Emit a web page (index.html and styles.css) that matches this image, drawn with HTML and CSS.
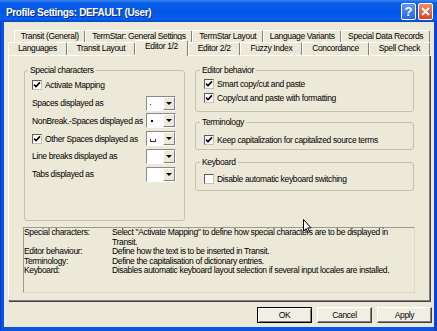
FILE: index.html
```html
<!DOCTYPE html>
<html>
<head>
    <title>Profile Settings</title>
    <link rel="stylesheet" href="styles.css">
</head>
<body>
    <div class="window">
        <div class="titlebar">
            <span class="title">Profile Settings: DEFAULT (User)</span>
            <div class="title-buttons">
                <span class="tbtn help">?</span>
                <span class="tbtn close">
                    <svg width="9" height="9" viewBox="0 0 9 9"><path d="M1 1l7 7M8 1l-7 7" stroke="#fff" stroke-width="1.8"/></svg>
                </span>
            </div>
        </div>

        <div class="client">
            <!-- tabs, two rows -->
            <div class="tabs">
                <div class="tab-row back">
                    <div class="tab">Transit (General)</div>
                    <div class="tab">TermStar: General Settings</div>
                    <div class="tab">TermStar Layout</div>
                    <div class="tab">Language Variants</div>
                    <div class="tab">Special Data Records</div>
                </div>
                <div class="tab-row front">
                    <div class="tab">Languages</div>
                    <div class="tab">Transit Layout</div>
                    <div class="tab active">Editor 1/2</div>
                    <div class="tab">Editor 2/2</div>
                    <div class="tab">Fuzzy Index</div>
                    <div class="tab">Concordance</div>
                    <div class="tab">Spell Check</div>
                </div>
            </div>

            <div class="panel">
                <div class="settings">
                    <fieldset class="group special">
                        <legend>Special characters</legend>
                        <div class="check">
                            <span class="box"><svg width="8" height="8" viewBox="0 0 8 8"><path d="M1 3.6l2 2 4-4.2" fill="none" stroke="#000" stroke-width="1.6"/></svg></span>
                            Activate Mapping
                        </div>
                        <div class="field-row first">
                            <span class="label">Spaces displayed as</span>
                            <span class="combo"><span class="value"><i class="dot-small"></i></span><span class="arrow"></span></span>
                        </div>
                        <div class="field-row">
                            <span class="label">NonBreak.-Spaces displayed as</span>
                            <span class="combo"><span class="value"><i class="dot-big"></i></span><span class="arrow"></span></span>
                        </div>
                        <div class="field-row">
                            <span class="label check">
                                <span class="box"><svg width="8" height="8" viewBox="0 0 8 8"><path d="M1 3.6l2 2 4-4.2" fill="none" stroke="#000" stroke-width="1.6"/></svg></span>
                                Other Spaces displayed as
                            </span>
                            <span class="combo"><span class="value"><i class="open-box"></i></span><span class="arrow"></span></span>
                        </div>
                        <div class="field-row">
                            <span class="label">Line breaks displayed as</span>
                            <span class="combo"><span class="value"></span><span class="arrow"></span></span>
                        </div>
                        <div class="field-row">
                            <span class="label">Tabs displayed as</span>
                            <span class="combo"><span class="value"></span><span class="arrow"></span></span>
                        </div>
                    </fieldset>

                    <div class="side">
                        <fieldset class="group editor">
                            <legend>Editor behavior</legend>
                            <div class="check">
                                <span class="box"><svg width="8" height="8" viewBox="0 0 8 8"><path d="M1 3.6l2 2 4-4.2" fill="none" stroke="#000" stroke-width="1.6"/></svg></span>
                                Smart copy/cut and paste
                            </div>
                            <div class="check">
                                <span class="box"><svg width="8" height="8" viewBox="0 0 8 8"><path d="M1 3.6l2 2 4-4.2" fill="none" stroke="#000" stroke-width="1.6"/></svg></span>
                                Copy/cut and paste with formatting
                            </div>
                        </fieldset>
                        <fieldset class="group terminology">
                            <legend>Terminology</legend>
                            <div class="check">
                                <span class="box"><svg width="8" height="8" viewBox="0 0 8 8"><path d="M1 3.6l2 2 4-4.2" fill="none" stroke="#000" stroke-width="1.6"/></svg></span>
                                Keep capitalization for capitalized source terms
                            </div>
                        </fieldset>
                        <fieldset class="group keyboard">
                            <legend>Keyboard</legend>
                            <div class="check">
                                <span class="box"></span>
                                Disable automatic keyboard switching
                            </div>
                        </fieldset>
                    </div>
                </div>

                <div class="desc">
                    <span>Special characters:</span>
                    <span>Select "Activate Mapping" to define how special characters are to be displayed in<br>Transit.</span>
                    <span>Editor behaviour:</span>
                    <span>Define how the text is to be inserted in Transit.</span>
                    <span>Terminology:</span>
                    <span>Define the capitalisation of dictionary entries.</span>
                    <span>Keyboard:</span>
                    <span>Disables automatic keyboard layout selection if several input locales are installed.</span>
                </div>
            </div>

            <div class="btn-row">
                <button class="btn default">OK</button>
                <button class="btn">Cancel</button>
                <button class="btn">Apply</button>
            </div>
        </div>

        <svg class="cursor" width="9" height="14" viewBox="0 0 9 14"><path d="M0.5 0.5v11.5l2.6-2.4 1.9 3.9 1.6-0.8-1.9-3.8h3.4z" fill="#fff" stroke="#000" stroke-width="1"/></svg>
    </div>
</body>
</html>
```

FILE: styles.css
```css
* {
    box-sizing: border-box;
}

body {
    margin: 0;
    background: #0a52de;
}

.window {
    position: relative;
    width: 437px;
    height: 331px;
    display: flex;
    flex-direction: column;
    background: linear-gradient(to right, #0839c8, #0a55e4 2px, #0a55e4 433px, #0839c8);
    font-family: "Liberation Sans", Arial, sans-serif;
    font-size: 8.5px;
    letter-spacing: -0.35px;
    color: #000;
}

.titlebar {
    height: 22px;
    display: flex;
    padding: 0 4px 0 6px;
    background: linear-gradient(#3c86f4 0, #0a5ee8 3px, #0256e6 60%, #0a5fee 88%, #0444c4 100%);
}

.title {
    flex: 1;
    color: #fff;
    font-weight: bold;
    font-size: 10px;
    letter-spacing: -0.35px;
    line-height: 22px;
    padding-top: 2px;
    text-shadow: 1px 1px #0c2a8c;
}

.title-buttons {
    display: flex;
    gap: 2px;
    margin-top: 3px;
}

.tbtn {
    width: 15px;
    height: 17px;
    border: 1px solid #fff;
    border-radius: 2px;
    display: flex;
    align-items: center;
    justify-content: center;
    color: #fff;
}

.help {
    background: linear-gradient(#5e97f8, #2a64e2);
    font-weight: bold;
    font-size: 13px;
    letter-spacing: 0;
}

.close {
    background: linear-gradient(#ee8d68, #d8441e);
}

.client {
    flex: 1;
    margin: 0 3px 4px 4px;
    padding: 8px 2px 4px 4px;
    background: #ece9d8;
    display: flex;
    flex-direction: column;
}

/* tabs */
.tabs {
    margin-right: 2px;
}

.tab-row {
    display: flex;
}

.tab-row.back {
    height: 12px;
    margin-left: 6px;
}

.tab-row.front {
    height: 13px;
    align-items: flex-end;
}

.tab {
    flex: 1 0 auto;
    height: 100%;
    padding: 0 3px;
    border: 1px solid;
    border-bottom: 0;
    border-color: #fff #808080 #808080 #fff;
    border-radius: 2px 2px 0 0;
    background: #ece9d8;
    text-align: center;
    line-height: 11px;
    white-space: nowrap;
}

.tab.active {
    position: relative;
    z-index: 1;
    height: 16px;
    margin-bottom: -1px;
}

/* page */
.panel {
    flex: 1;
    margin-right: 2px;
    padding: 8.5px 14px 7px;
    border: 1px solid;
    border-color: #fff #808080 #808080 #fff;
    box-shadow: 1px 1px 0 #404040;
    display: flex;
    flex-direction: column;
}

.settings {
    display: flex;
    align-items: flex-start;
    gap: 10px;
    padding: 0 1px;
}

.group {
    margin: 0;
    min-width: 0;
    border: 1px solid #c5c2b2;
    border-radius: 3px;
    padding: 0 8px 0 8px;
}

.group legend {
    padding: 0 2px;
    margin-left: -4px;
    line-height: 11px;
}

.special {
    width: 161px;
    padding: 3px 8px 38.5px 7px;
}

.side {
    width: 219px;
    display: flex;
    flex-direction: column;
}

.editor {
    padding-top: 2.3px;
    padding-bottom: 6px;
}

.editor .check + .check {
    margin-top: 1px;
}

.terminology {
    margin-top: 5.1px;
    padding-top: 5.2px;
    padding-bottom: 3.3px;
}

.keyboard {
    margin-top: 6.2px;
    padding-top: 4.8px;
    padding-bottom: 5px;
}

.check {
    display: flex;
    align-items: center;
    gap: 3px;
    height: 13px;
    white-space: nowrap;
}

.box {
    width: 10px;
    height: 10px;
    border: 1px solid;
    border-color: #5c5c5c #c4c1b4 #c4c1b4 #5c5c5c;
    background: #fff;
    display: flex;
    align-items: center;
    justify-content: center;
}

.field-row {
    display: flex;
    align-items: center;
    height: 15px;
    margin-top: 2.75px;
}

.field-row.first {
    margin-top: 4px;
}

.field-row .label {
    flex: 1;
    white-space: nowrap;
}

.combo {
    width: 30px;
    height: 15px;
    display: flex;
    border: 1px solid;
    border-color: #8a8a8a #fff #fff #8a8a8a;
    background: #fff;
}

.combo .value {
    flex: 1;
    display: flex;
    align-items: center;
    padding-left: 3px;
}

.combo .arrow {
    width: 12px;
    border: 1px solid;
    border-color: #fff #808080 #808080 #fff;
    background: #ece9d8;
    display: flex;
    align-items: center;
    justify-content: center;
}

.combo .arrow::after {
    content: "";
    border-style: solid;
    border-width: 3px 3px 0;
    border-color: #000 transparent transparent;
}

.dot-small {
    width: 1px;
    height: 1px;
    margin-top: 2px;
    background: #333;
}

.dot-big {
    width: 2px;
    height: 2px;
    margin-left: 1px;
    background: #000;
}

.open-box {
    width: 6px;
    height: 3px;
    margin-top: 3px;
    border: 1px solid #333;
    border-top: 0;
}

.desc {
    flex: 1;
    margin-top: 6px;
    border: 1px solid;
    border-color: #9d9a8c #dcd9cc #dcd9cc #9d9a8c;
    display: grid;
    grid-template-columns: 88px auto;
    align-content: start;
    line-height: 9.5px;
    white-space: nowrap;
}

.btn-row {
    display: flex;
    justify-content: flex-end;
    gap: 5px;
    margin-top: 6px;
}

.btn {
    width: 55px;
    height: 16px;
    padding: 0;
    font: inherit;
    letter-spacing: inherit;
    color: #000;
    background: #f1efe4;
    border: 1px solid;
    border-color: #fff #404040 #404040 #fff;
    box-shadow: inset -1px -1px #808080;
}

.btn.default {
    border-color: #000;
    box-shadow: inset 1px 1px #fff, inset -1px -1px #808080;
}

.cursor {
    position: absolute;
    left: 303px;
    top: 219px;
}
```
